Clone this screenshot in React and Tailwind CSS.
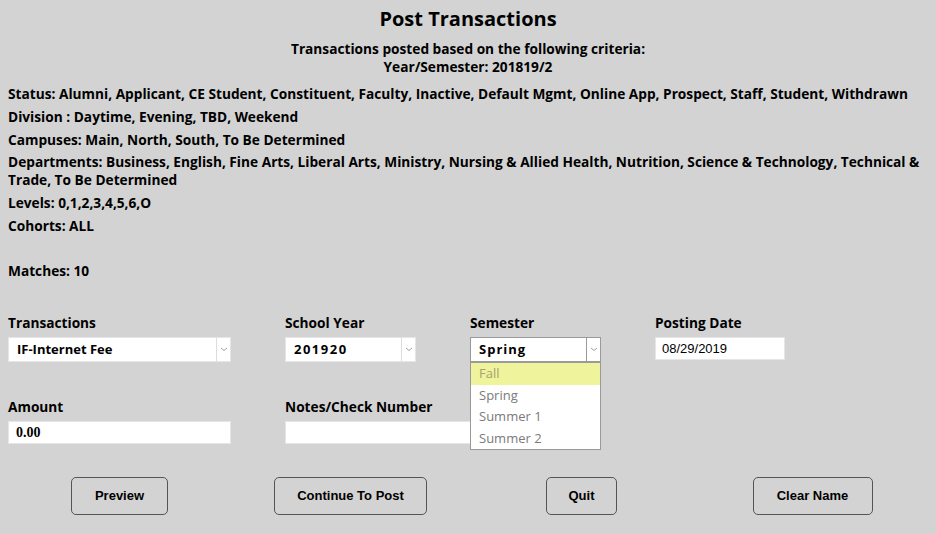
import React, { useState } from 'react'

const gothic = { fontFamily: '"Open Sans", Lato, sans-serif' }

function Chevron() {
  return (
    <svg width="8" height="5" viewBox="0 0 8 5" className="text-[#a0a0a0]">
      <path d="M1 1 L4 3.5 L7 1" fill="none" stroke="currentColor" strokeWidth="1" />
    </svg>
  )
}

function FakeSelect({ value, width, open, valueClass = '' }) {
  return (
    <div
      className={`flex h-[25px] bg-white ${open ? 'border border-[#9a9a9a]' : 'border border-[#e6e6e6]'}`}
      style={{ width }}
    >
      <div className={`flex-1 flex items-center pl-[8px] text-[13px] font-bold text-black ${valueClass}`}>{value}</div>
      <div className={`w-[14px] flex items-center justify-center border-l ${open ? 'border-[#9a9a9a]' : 'border-[#dcdcdc]'}`}>
        <Chevron />
      </div>
    </div>
  )
}

export default function App() {
  const [semOpen] = useState(true)
  const semesters = ['Fall', 'Spring', 'Summer 1', 'Summer 2']

  return (
    <div className="w-[936px] h-[534px] bg-[#d3d3d3] text-black overflow-hidden" style={gothic}>
      <div className="flex flex-col items-center pt-[6px]">
        <p className="text-[20px] font-bold leading-[26px]">Post Transactions</p>
        <p className="text-[13.7px] font-bold leading-[18px] mt-[8px]">Transactions posted based on the following criteria:</p>
        <p className="text-[13.7px] font-bold leading-[18px]">Year/Semester: 201819/2</p>
      </div>

      <div className="pl-[8px] pr-[8px] text-[13.7px] font-bold leading-[18px] mt-[9px]">
        <p>Status: Alumni, Applicant, CE Student, Constituent, Faculty, Inactive, Default Mgmt, Online App, Prospect, Staff, Student, Withdrawn</p>
        <p className="mt-[5px]">Division : Daytime, Evening, TBD, Weekend</p>
        <p className="mt-[5px]">Campuses: Main, North, South, To Be Determined</p>
        <p className="mt-[4px]">Departments: Business, English, Fine Arts, Liberal Arts, Ministry, Nursing &amp; Allied Health, Nutrition, Science &amp; Technology, Technical &amp; Trade, To Be Determined</p>
        <p className="mt-[5px]">Levels: 0,1,2,3,4,5,6,O</p>
        <p className="mt-[5px]">Cohorts: ALL</p>
        <p className="mt-[27px]">Matches: 10</p>
      </div>

      <div className="grid grid-cols-[277px_185px_185px_1fr] pl-[8px] mt-[35px] text-[13.7px]">
        <div>
          <p className="font-bold leading-[16px]">Transactions</p>
          <div className="mt-[6px]">
            <FakeSelect value="IF-Internet Fee" width={223} />
          </div>
        </div>
        <div>
          <p className="font-bold leading-[16px]">School Year</p>
          <div className="mt-[6px]">
            <FakeSelect value="201920" width={131} valueClass="tracking-[1.5px]" />
          </div>
        </div>
        <div className="relative z-10">
          <p className="font-bold leading-[16px]">Semester</p>
          <div className="mt-[6px]">
            <FakeSelect value="Spring" width={131} open valueClass="tracking-[1px]" />
          </div>
          {semOpen && (
            <ul className="absolute left-0 top-[47px] w-[131px] bg-white border border-[#9a9a9a] text-[13px] text-[#7a7a7a]">
              {semesters.map((s, i) => (
                <li
                  key={s}
                  className={`h-[21.5px] leading-[21.5px] pl-[8px] ${i === 0 ? 'bg-[#eef39c] text-[#aaa070]' : ''}`}
                >
                  {s}
                </li>
              ))}
            </ul>
          )}
        </div>
        <div>
          <p className="font-bold leading-[16px]">Posting Date</p>
          <div className="mt-[6px] w-[130px] h-[23px] bg-white border border-[#e6e6e6] flex items-center pl-[6px] text-[13px] text-black" style={{ fontFamily: '"Liberation Sans", Arial, sans-serif' }}>
            08/29/2019
          </div>
        </div>

        <div className="mt-[37px]">
          <p className="font-bold leading-[16px]">Amount</p>
          <div className="mt-[6px] w-[223px] h-[23px] bg-white border border-[#e6e6e6] flex items-center pl-[7px] text-[14px] font-bold" style={{ fontFamily: '"Liberation Serif", "Times New Roman", serif' }}>
            0.00
          </div>
        </div>
        <div className="mt-[37px] col-span-3">
          <p className="font-bold leading-[16px]">Notes/Check Number</p>
          <div className="mt-[6px] w-[223px] h-[23px] bg-white border border-[#e6e6e6]"></div>
        </div>
      </div>

      <div className="grid grid-cols-[231px_231px_231px_231px] pl-[4px] mt-[33px]" style={{ fontFamily: '"Liberation Sans", Arial, sans-serif' }}>
        <div className="flex justify-center">
          <button className="w-[97px] h-[38px] border border-[#555] rounded-[5px] text-[13px] font-bold">Preview</button>
        </div>
        <div className="flex justify-center">
          <button className="w-[153px] h-[38px] border border-[#555] rounded-[5px] text-[13px] font-bold">Continue To Post</button>
        </div>
        <div className="flex justify-center">
          <button className="w-[71px] h-[38px] border border-[#555] rounded-[5px] text-[13px] font-bold">Quit</button>
        </div>
        <div className="flex justify-center">
          <button className="w-[120px] h-[38px] border border-[#555] rounded-[5px] text-[13px] font-bold">Clear Name</button>
        </div>
      </div>
    </div>
  )
}
